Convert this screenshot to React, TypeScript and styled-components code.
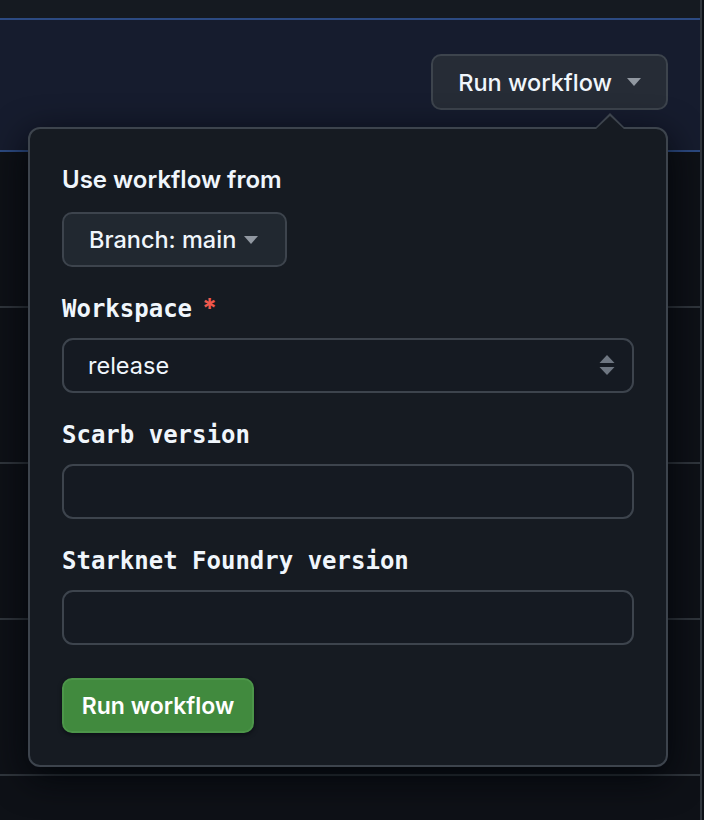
import React from "react";
import styled, { createGlobalStyle } from "styled-components";

const GlobalStyle = createGlobalStyle`
  html, body {
    margin: 0;
    padding: 0;
    background: #0d1117;
    overflow: hidden;
  }
  body {
    font-family: "Inter", "Noto Sans", sans-serif;
    color: #f0f6fc;
  }
`;

const Page = styled.div`
  width: 704px;
  height: 820px;
  overflow: hidden;
  background: #0d1117;
`;

const List = styled.div`
  width: 700px;
  border-right: 2px solid #30363d;
  display: flex;
  flex-direction: column;
`;

const HeadRow = styled.div`
  height: 18px;
  background: #151a21;
  border-bottom: 2px solid #2c4a82;
`;

const Banner = styled.div`
  height: 132px;
  background: #161c2e;
  border-bottom: 2px solid #2c4a82;
  display: flex;
  justify-content: flex-end;
  align-items: flex-start;
  padding: 34px 32px 0 0;
  box-sizing: border-box;
`;

const Row = styled.div<{ $h: number }>`
  height: ${(p) => p.$h}px;
  background: #0e1117;
  border-bottom: 2px solid #30363d;
`;

const MenuWrap = styled.div`
  position: relative;
`;

const Caret = styled.span`
  width: 0;
  height: 0;
  border-left: 7.5px solid transparent;
  border-right: 7.5px solid transparent;
  border-top: 8px solid #9198a1;
`;

const Button = styled.button`
  display: inline-flex;
  align-items: center;
  gap: 15px;
  height: 56px;
  padding: 0 25px;
  background: #262c36;
  border: 2px solid #3d444d;
  border-radius: 10px;
  color: #f0f6fc;
  font-family: "Inter", "Noto Sans", sans-serif;
  font-size: 23.5px;
  font-weight: 500;
  box-sizing: border-box;
  cursor: pointer;
`;

const Popover = styled.div`
  position: absolute;
  right: 0;
  top: calc(100% + 17px);
  width: 640px;
  box-sizing: border-box;
  background: #161b22;
  border: 2px solid #3d444d;
  border-radius: 12px;
  padding: 37px 32px 32px 32px;
  box-shadow: 0 10px 36px rgba(1, 4, 9, 0.9);
  z-index: 10;

  &::before,
  &::after {
    content: "";
    position: absolute;
    right: 41px;
    width: 0;
    height: 0;
    border-left: 15px solid transparent;
    border-right: 15px solid transparent;
  }
  &::before {
    top: -16px;
    border-bottom: 15px solid #3d444d;
  }
  &::after {
    top: -13px;
    border-bottom: 14px solid #161b22;
  }
`;

const Title = styled.div`
  font-size: 24px;
  font-weight: 600;
  line-height: 28px;
  margin-bottom: 18px;
`;

const BranchButton = styled(Button)`
  background: #212830;
  padding: 0 25px;
  gap: 8px;
  width: 225px;
  height: 55px;
`;

const Field = styled.div`
  margin-top: 26px;
  display: flex;
  flex-direction: column;
`;

const Label = styled.label`
  font-family: "DejaVu Sans Mono", "Liberation Mono", monospace;
  font-size: 24px;
  font-weight: 700;
  line-height: 32px;
  margin-bottom: 13px;
  display: flex;
  align-items: center;
  gap: 10px;
`;

const Required = styled.span`
  color: #f0584c;
  font-family: "Inter", sans-serif;
  font-size: 27px;
`;

const Input = styled.div`
  height: 55px;
  box-sizing: border-box;
  border: 2px solid #3d444d;
  border-radius: 11px;
  background: #151a22;
  display: flex;
  align-items: center;
  justify-content: space-between;
  padding: 0 17px 0 24px;
  font-size: 23.5px;
  color: #f0f6fc;
`;

const Arrows = styled.svg`
  width: 16px;
  height: 22px;
`;

const Submit = styled.button`
  margin-top: 33px;
  height: 55px;
  width: 192px;
  box-sizing: border-box;
  background: #418a3e;
  border: 2px solid #4c9549;
  border-radius: 10px;
  color: #ffffff;
  font-family: "Inter", "Noto Sans", sans-serif;
  font-size: 23px;
  font-weight: 600;
  box-shadow: 0 2px 4px rgba(1, 4, 9, 0.5);
  cursor: pointer;
`;

export default function App() {
  return (
    <Page>
      <GlobalStyle />
      <List>
        <HeadRow />
        <Banner>
          <MenuWrap>
            <Button>
              Run workflow
              <Caret />
            </Button>
            <Popover>
              <Title>Use workflow from</Title>
              <BranchButton>
                Branch: main
                <Caret />
              </BranchButton>
              <Field>
                <Label>
                  Workspace<Required>*</Required>
                </Label>
                <Input>
                  release
                  <Arrows viewBox="0 0 16 22">
                    <path d="M8 0 L15.5 8 H0.5 Z" fill="#6e7681" />
                    <path d="M0.5 12 H15.5 L8 20 Z" fill="#6e7681" />
                  </Arrows>
                </Input>
              </Field>
              <Field>
                <Label>Scarb version</Label>
                <Input />
              </Field>
              <Field>
                <Label>Starknet Foundry version</Label>
                <Input />
              </Field>
              <Submit>Run workflow</Submit>
            </Popover>
          </MenuWrap>
        </Banner>
        <Row $h={154} />
        <Row $h={154} />
        <Row $h={154} />
        <Row $h={154} />
        <Row $h={60} />
      </List>
    </Page>
  );
}
